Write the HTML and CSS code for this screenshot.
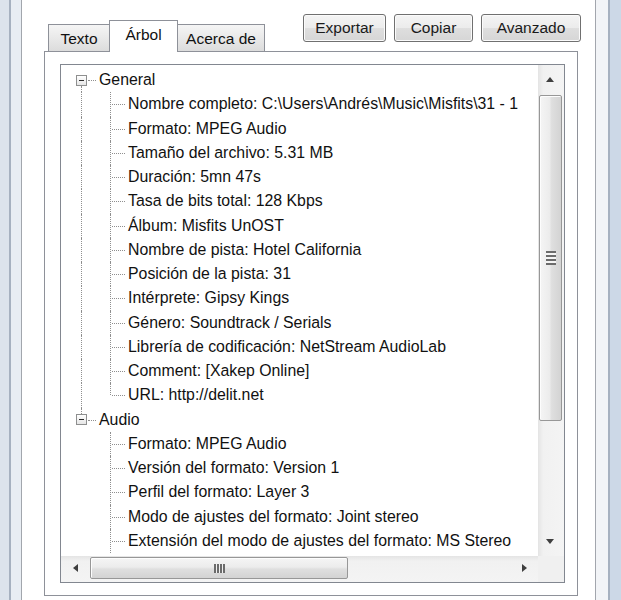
FILE: index.html
```html
<!DOCTYPE html>
<html>
<head>
<meta charset="utf-8">
<link rel="stylesheet" href="styles.css">
</head>
<body>
<div class="window">
  <div class="frame-left"><div class="fl1"></div><div class="fl2"></div><div class="fl3"></div></div>
  <div class="main">
    <div class="topbar">
      <div class="tabs">
        <div class="tab tab-texto">Texto</div>
        <div class="tab tab-active">Árbol</div>
        <div class="tab tab-acerca">Acerca de</div>
      </div>
      <div class="buttons">
        <div class="btn btn-exp">Exportar</div>
        <div class="btn btn-cop">Copiar</div>
        <div class="btn btn-ava">Avanzado</div>
      </div>
    </div>
    <div class="panel">
      <div class="treebox">
        <div class="tree">
          <div class="row"><div class="c exp down"><div class="box"></div></div><span class="lbl">General</span></div>
          <div class="row"><div class="c i"></div><div class="c t"></div><span class="lbl">Nombre completo: C:\Users\Andrés\Music\Misfits\31 - 1</span></div>
          <div class="row"><div class="c i"></div><div class="c t"></div><span class="lbl">Formato: MPEG Audio</span></div>
          <div class="row"><div class="c i"></div><div class="c t"></div><span class="lbl">Tamaño del archivo: 5.31 MB</span></div>
          <div class="row"><div class="c i"></div><div class="c t"></div><span class="lbl">Duración: 5mn 47s</span></div>
          <div class="row"><div class="c i"></div><div class="c t"></div><span class="lbl">Tasa de bits total: 128 Kbps</span></div>
          <div class="row"><div class="c i"></div><div class="c t"></div><span class="lbl">Álbum: Misfits UnOST</span></div>
          <div class="row"><div class="c i"></div><div class="c t"></div><span class="lbl">Nombre de pista: Hotel California</span></div>
          <div class="row"><div class="c i"></div><div class="c t"></div><span class="lbl">Posición de la pista: 31</span></div>
          <div class="row"><div class="c i"></div><div class="c t"></div><span class="lbl">Intérprete: Gipsy Kings</span></div>
          <div class="row"><div class="c i"></div><div class="c t"></div><span class="lbl">Género: Soundtrack / Serials</span></div>
          <div class="row"><div class="c i"></div><div class="c t"></div><span class="lbl">Librería de codificación: NetStream AudioLab</span></div>
          <div class="row"><div class="c i"></div><div class="c t"></div><span class="lbl">Comment: [Xakep Online]</span></div>
          <div class="row"><div class="c i"></div><div class="c l"></div><span class="lbl">URL: http://delit.net</span></div>
          <div class="row"><div class="c exp up"><div class="box"></div></div><span class="lbl">Audio</span></div>
          <div class="row"><div class="c"></div><div class="c t"></div><span class="lbl">Formato: MPEG Audio</span></div>
          <div class="row"><div class="c"></div><div class="c t"></div><span class="lbl">Versión del formato: Version 1</span></div>
          <div class="row"><div class="c"></div><div class="c t"></div><span class="lbl">Perfil del formato: Layer 3</span></div>
          <div class="row"><div class="c"></div><div class="c t"></div><span class="lbl">Modo de ajustes del formato: Joint stereo</span></div>
          <div class="row"><div class="c"></div><div class="c t"></div><span class="lbl">Extensión del modo de ajustes del formato: MS Stereo</span></div>
        </div>
        <div class="vscroll">
          <div class="varrow"><svg width="8" height="5" viewBox="0 0 8 5"><path d="M0 5 L4 0 L8 5 Z" fill="#3f3f3f"/></svg></div>
          <div class="vthumb"><div class="vgrip"></div></div>
          <div class="vtrack"></div>
          <div class="varrow"><svg width="8" height="5" viewBox="0 0 8 5"><path d="M0 0 L8 0 L4 5 Z" fill="#3f3f3f"/></svg></div>
        </div>
        <div class="hscroll">
          <div class="harrow"><svg width="5" height="8" viewBox="0 0 5 8"><path d="M5 0 L5 8 L0 4 Z" fill="#3f3f3f"/></svg></div>
          <div class="hthumb"><div class="hgrip"></div></div>
          <div class="htrack"></div>
          <div class="harrow"><svg width="5" height="8" viewBox="0 0 5 8"><path d="M0 0 L5 4 L0 8 Z" fill="#3f3f3f"/></svg></div>
        </div>
        <div class="corner"></div>
      </div>
    </div>
  </div>
  <div class="frame-right"><div class="fr1"></div><div class="fr2"></div><div class="fr3"></div></div>
</div>
</body>
</html>
```
FILE: styles.css
```css
html, body {
  margin: 0;
  padding: 0;
  width: 621px;
  height: 600px;
  overflow: hidden;
  background: #ffffff;
}
body {
  font-family: "Liberation Sans", Arial, sans-serif;
  font-size: 15.5px;
  color: #111;
}
.window {
  display: flex;
  width: 621px;
  height: 600px;
}
.frame-left {
  display: flex;
  width: 22px;
  flex: none;
}
.fl1 { width: 9px; background: #dce3ec; }
.fl2 { width: 2px; background: #a6b1c0; }
.fl3 { width: 10px; background: #e8edf3; border-right: 1px solid #a2a6ad; }
.frame-right {
  display: flex;
  width: 26px;
  flex: none;
}
.fr1 { width: 12px; background: #f2f4f7; border-left: 1px solid #a2a6ad; }
.fr2 { width: 2px; background: #a6b1c0; }
.fr3 { width: 11px; background: #ccd8e7; }
.main {
  width: 573px;
  flex: none;
  background: #ffffff;
}
.topbar {
  display: flex;
  justify-content: space-between;
  height: 51px;
}
.tabs {
  display: flex;
  align-items: flex-end;
  align-self: flex-end;
  margin-left: 26px;
}
.tab {
  box-sizing: border-box;
  height: 27px;
  border: 1px solid #8e9199;
  border-bottom: none;
  background: linear-gradient(#f5f5f5, #e9e9e9 50%, #dcdcdc);
  display: flex;
  align-items: center;
  justify-content: center;
  padding-top: 1px;
}
.tab-texto { width: 62px; }
.tab-active {
  position: relative;
  z-index: 2;
  width: 69px;
  height: 32px;
  margin-left: -1px;
  margin-bottom: -1px;
  background: #ffffff;
  padding-top: 0;
  padding-bottom: 4px;
}
.tab-acerca { width: 88px; margin-left: -1px; }
.buttons {
  display: flex;
  gap: 8px;
  align-self: flex-start;
  margin-top: 14px;
  margin-right: 14px;
}
.btn {
  box-sizing: border-box;
  height: 28px;
  border: 1px solid #707070;
  border-radius: 3px;
  box-shadow: inset 0 0 0 1px #fbfbfb;
  background: linear-gradient(#f4f4f4, #ececec 48%, #dedede 52%, #d6d6d6);
  display: flex;
  align-items: center;
  justify-content: center;
  color: #1a1a1a;
}
.btn-exp { width: 83px; }
.btn-cop { width: 79px; }
.btn-ava { width: 100px; }
.panel {
  position: relative;
  z-index: 1;
  box-sizing: border-box;
  width: 534px;
  height: 545px;
  margin-left: 22px;
  border: 1px solid #8e9199;
  padding: 12px 12px 12px 15px;
  background: #ffffff;
}
.treebox {
  box-sizing: border-box;
  width: 505px;
  height: 519px;
  border: 1px solid #828790;
  display: grid;
  grid-template-columns: 477px 26px;
  grid-template-rows: 491px 26px;
}
.tree {
  overflow: hidden;
  padding: 3px 0 0 6px;
  background: #ffffff;
  font-size: 15.85px;
}
.row {
  display: flex;
  align-items: center;
  height: 24.26px;
  white-space: nowrap;
}
.c {
  position: relative;
  flex: none;
  width: 29px;
  height: 100%;
}
.lbl { padding-left: 3px; color: #111; }
.c.i::before, .c.t::before, .c.l::before {
  content: "";
  position: absolute;
  left: 14px;
  top: 0;
  bottom: 0;
  border-left: 1px dotted #8f8f8f;
}
.c.l::before { bottom: 50%; }
.c.t::after, .c.l::after {
  content: "";
  position: absolute;
  left: 16px;
  width: 13px;
  top: 50%;
  border-top: 1px dotted #8f8f8f;
}
.c.exp::before {
  content: "";
  position: absolute;
  left: 14px;
  border-left: 1px dotted #8f8f8f;
}
.c.exp.down::before { top: calc(50% + 6px); bottom: 0; }
.c.exp.up::before { top: 0; bottom: calc(50% + 6px); }
.c.exp::after {
  content: "";
  position: absolute;
  left: 21px;
  width: 8px;
  top: 50%;
  border-top: 1px dotted #8f8f8f;
}
.box {
  position: absolute;
  box-sizing: border-box;
  left: 9px;
  top: calc(50% - 5.5px);
  width: 11px;
  height: 11px;
  border: 1px solid #8e8f8f;
  background: linear-gradient(#ffffff, #e6e6e6);
}
.box::after {
  content: "";
  position: absolute;
  left: 2px;
  top: 4px;
  width: 5px;
  height: 1px;
  background: #2d2d2d;
}
.vscroll {
  display: flex;
  flex-direction: column;
  background: linear-gradient(to right, #e4e4e4, #f1f1f1 20%, #f4f4f4);
}
.varrow {
  height: 29px;
  flex: none;
  display: flex;
  align-items: center;
  justify-content: center;
  padding-right: 2px;
}
.vthumb {
  box-sizing: border-box;
  flex: none;
  height: 326px;
  margin: 1px 2px 0 1px;
  border: 1px solid #979797;
  border-radius: 2px;
  box-shadow: inset 1px 1px 0 #fdfdfd;
  background: linear-gradient(to right, #f5f5f5, #ececec 45%, #dfdfdf 55%, #d3d3d3);
  display: flex;
  align-items: center;
  justify-content: center;
}
.vgrip {
  width: 10px;
  height: 14px;
  background: repeating-linear-gradient(to bottom, #6b6b6b 0 2px, #f4f4f4 2px 4px);
}
.vtrack { flex: 1; }
.hscroll {
  display: flex;
  background: linear-gradient(#e4e4e4, #f1f1f1 20%, #f4f4f4);
}
.harrow {
  width: 28px;
  flex: none;
  display: flex;
  align-items: center;
  justify-content: center;
  padding-bottom: 3px;
}
.hthumb {
  box-sizing: border-box;
  flex: none;
  width: 258px;
  height: 22px;
  margin: 1px 0 0 1px;
  border: 1px solid #979797;
  border-radius: 2px;
  box-shadow: inset 1px 1px 0 #fdfdfd;
  background: linear-gradient(#f5f5f5, #ececec 45%, #dfdfdf 55%, #d3d3d3);
  display: flex;
  align-items: center;
  justify-content: center;
}
.hgrip {
  width: 11px;
  height: 9px;
  background: repeating-linear-gradient(to right, #6b6b6b 0 2px, #f0f0f0 2px 3px);
}
.htrack { flex: 1; }
.corner { background: #f0f0f0; }
```
